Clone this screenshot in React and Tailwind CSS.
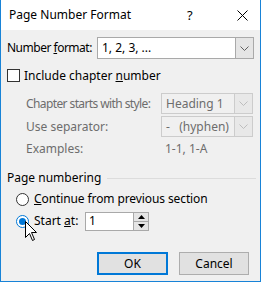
import React from 'react';

const font = { fontFamily: '"Segoe UI", "Noto Sans", "Open Sans", sans-serif' };

function Chevron({ disabled }) {
    return (
        <svg width="9" height="5" viewBox="0 0 9 5" className="block">
            <path d="M0.5 0.5 L4.5 4.5 L8.5 0.5" fill="none" stroke={disabled ? '#bdbdbd' : '#606060'} strokeWidth="1" />
        </svg>
    );
}

function Select({ value, disabled, className }) {
    return (
        <div className={`shrink-0 flex items-stretch border ${disabled ? 'border-[#cccccc] bg-[#f0f0f0] text-[#6d6d6d]' : 'border-[#a9a9a9] bg-white text-black'} ${className}`}>
            <div className="flex-1 flex items-center pl-[4px] whitespace-pre">{value}</div>
            <div className={`w-[18px] flex items-center justify-center border-l ${disabled ? 'border-[#cccccc] bg-[#e8e8e8]' : 'border-[#a9a9a9] bg-[#e5e5e5]'}`}>
                <Chevron disabled={disabled} />
            </div>
        </div>
    );
}

function Radio({ checked }) {
    return (
        <div className={`shrink-0 w-[13px] h-[13px] rounded-full border bg-white flex items-center justify-center ${checked ? 'border-[#0078d7]' : 'border-[#333333]'}`}>
            {checked && <div className="w-[7px] h-[7px] rounded-full bg-[#0078d7]" />}
        </div>
    );
}

export default function App() {
    return (
        <div className="relative w-[261px] h-[282px] bg-[#f0f0f0] border-x border-b border-[#1883d7] flex flex-col text-[12px] text-black leading-none whitespace-nowrap" style={font}>
            {/* Title bar */}
            <div className="h-[30px] bg-white flex items-center shrink-0">
                <span className="ml-[8px] text-[12px]">Page Number Format</span>
                <span className="ml-auto text-[13px] w-[10px] mr-[40px]">?</span>
                <svg width="11" height="11" viewBox="0 0 11 11" className="mr-[12px]">
                    <path d="M0.5 0.5 L10.5 10.5 M10.5 0.5 L0.5 10.5" stroke="#000" strokeWidth="1" />
                </svg>
            </div>

            {/* Number format */}
            <div className="mt-[7px] flex items-center h-[22px] pl-[6px]">
                <span className="w-[90px] shrink-0 tracking-[-0.5px]">Number <u>f</u>ormat:</span>
                <Select value="1, 2, 3, ..." className="w-[157px] h-[22px]" />
            </div>

            {/* Include chapter number */}
            <div className="mt-[10px] flex items-center h-[13px] pl-[6px]">
                <div className="shrink-0 w-[13px] h-[13px] border border-[#333333] bg-white" />
                <span className="ml-[4px]">Include chapter <u>n</u>umber</span>
            </div>

            <div className="mt-[11px] flex items-center h-[21px] pl-[25px] text-[#6d6d6d]">
                <span className="w-[135px] shrink-0 tracking-[-0.6px]">Chapter starts with style:</span>
                <Select value="Heading 1" disabled className="w-[92px] h-[21px]" />
            </div>
            <div className="mt-[2px] flex items-center h-[21px] pl-[25px] text-[#6d6d6d]">
                <span className="w-[135px] shrink-0">Use separator:</span>
                <Select value="-   (hyphen)" disabled className="w-[92px] h-[21px]" />
            </div>
            <div className="mt-[5px] flex items-center h-[14px] pl-[25px] text-[#6d6d6d]">
                <span className="w-[139px] shrink-0">Examples:</span>
                <span>1-1, 1-A</span>
            </div>

            {/* Page numbering group */}
            <div className="mt-[15px] flex items-center h-[14px] pl-[6px] pr-[4px]">
                <span>Page numbering</span>
                <div className="flex-1 h-px bg-[#dcdcdc] ml-[6px]" />
            </div>
            <div className="mt-[7px] flex items-center h-[14px] pl-[15px]">
                <Radio />
                <span className="ml-[5px] tracking-[-0.1px]"><u>C</u>ontinue from previous section</span>
            </div>
            <div className="mt-[5px] flex items-center h-[20px] pl-[15px]">
                <Radio checked />
                <span className="ml-[5px] w-[51px] shrink-0">Start <u>a</u>t:</span>
                <div className="shrink-0 w-[64px] h-[19px] border border-[#a9a9a9] bg-white flex items-stretch">
                    <div className="flex-1 flex items-center pl-[3px]">1</div>
                    <div className="w-[15px] flex flex-col border-l border-[#a9a9a9]">
                        <div className="flex-1 bg-[#e5e5e5] border-b border-[#a9a9a9] flex items-center justify-center">
                            <svg width="7" height="4" viewBox="0 0 7 4"><path d="M0 4 L3.5 0 L7 4 Z" fill="#000" /></svg>
                        </div>
                        <div className="flex-1 bg-[#e5e5e5] flex items-center justify-center">
                            <svg width="7" height="4" viewBox="0 0 7 4"><path d="M0 0 L3.5 4 L7 0 Z" fill="#000" /></svg>
                        </div>
                    </div>
                </div>
            </div>

            {/* Buttons */}
            <div className="mt-[21px] flex justify-end gap-[11px] pr-[11px]">
                <button className="w-[71px] h-[23px] border-2 border-[#0078d7] bg-[#e1e1e1] text-[12px]">OK</button>
                <button className="w-[70px] h-[23px] border border-[#adadad] bg-[#e1e1e1] text-[12px]">Cancel</button>
            </div>

            {/* Mouse cursor */}
            <svg width="13" height="21" viewBox="0 0 13 21" className="absolute left-[24px] top-[221px]">
                <path d="M0.5 0.5 L0.5 16.5 L4.5 12.5 L7.5 19.5 L9.5 18.5 L6.5 11.5 L11.5 11.5 Z" fill="#fff" stroke="#000" strokeWidth="1" strokeLinejoin="miter" />
            </svg>
        </div>
    );
}
